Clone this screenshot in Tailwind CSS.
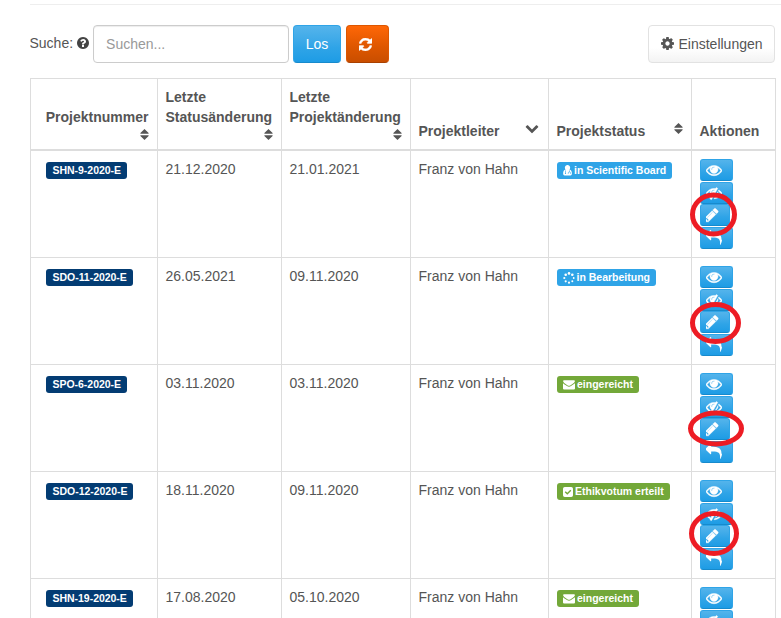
<!DOCTYPE html>
<html lang="de">
<head>
<meta charset="utf-8">
<title>Projekte</title>
<script src="https://cdn.jsdelivr.net/npm/@tailwindcss/browser@4"></script>
</head>
<body class="relative h-[618px] w-[781px] overflow-hidden bg-white font-['Liberation_Sans',Arial,sans-serif] text-[14px] leading-5 text-[#555]">
<svg class="hidden">
  <symbol id="eye" viewBox="0 0 1792 1792"><path stroke="white" stroke-width="50" d="M1664 960q-152-236-381-353 61 104 61 225 0 185-131.5 316.5t-316.5 131.5-316.5-131.5-131.5-316.5q0-121 61-225-229 117-381 353 133 205 333.5 326.5t434.5 121.5 434.5-121.5 333.5-326.5zm-720-384q0-20-14-34t-34-14q-125 0-214.5 89.5t-89.5 214.5q0 20 14 34t34 14 34-14 14-34q0-86 61-147t147-61q20 0 34-14t14-34zm848 384q0 34-20 69-140 230-376.5 368.5t-499.5 138.5-499.5-139-376.5-368q-20-35-20-69t20-69q140-229 376.5-368t499.5-139 499.5 139 376.5 368q20 35 20 69z"/></symbol>
  <symbol id="eye-slash" viewBox="0 0 1792 1792"><path stroke="white" stroke-width="50" d="M555 1335l78-141q-87-63-136-159t-49-203q0-121 61-225-229 117-381 353 167 258 427 375zm389-759q0-20-14-34t-34-14q-125 0-214.5 89.5t-89.5 214.5q0 20 14 34t34 14 34-14 14-34q0-86 61-147t147-61q20 0 34-14t14-34zm363-191q0 7-1 9-106 189-316 567t-315 566l-49 89q-10 16-28 16-12 0-134-70-16-10-16-28 0-12 44-87-143-65-263.5-173t-208.5-245q-20-31-20-69t20-69q153-235 380-371t496-136q89 0 180 17l54-97q10-16 28-16 5 0 18 6t31 15.5 33 18.5 31.5 18.5 19.5 11.5q16 10 16 27zm37 447q0 139-79 253.5t-209 164.5l280-502q8 45 8 84zm448 128q0 35-20 69-39 64-109 145-150 172-347.5 267t-419.5 95l74-132q212-18 392.5-137t301.5-307q-115-179-282-294l63-112q95 64 182.5 153t144.5 184q20 34 20 69z"/></symbol>
  <symbol id="pencil" viewBox="270 0 1792 1792"><path stroke="white" stroke-width="40" d="M491 1536l91-91-235-235-91 91v107h128v128h107zm523-928q0-22-22-22-10 0-17 7l-542 542q-7 7-7 17 0 22 22 22 10 0 17-7l542-542q7-7 7-17zm-54-192l416 416-832 832h-416v-416zm683 96q0 53-37 90l-166 166-416-416 166-165q36-38 90-38 53 0 91 38l235 234q37 39 37 91z"/></symbol>
  <symbol id="reply" viewBox="0 0 1792 1792"><path d="M1792 1120q0 166-127 451-3 7-10.5 24t-13.5 30-13 22q-12 17-28 17-15 0-23.5-10t-8.5-25q0-9 2.5-26.5t2.5-23.5q5-68 5-123 0-112-19.5-200.5t-54-153.5-89-112-117-79-144.5-47.5-164.5-25-186.5-7.5h-224v256q0 26-19 45t-45 19-45-19l-512-512q-19-19-19-45t19-45l512-512q19-19 45-19t45 19 19 45v256h224q713 0 875 403 53 134 53 333z"/></symbol>
  <symbol id="refresh" viewBox="128 128 1536 1536"><path stroke="white" stroke-width="50" d="M1639 1056q0 5-1 7-64 268-268 434.5t-478 166.5q-146 0-282.5-55t-243.5-157l-129 129q-19 19-45 19t-45-19-19-45v-448q0-26 19-45t45-19h448q26 0 45 19t19 45-19 45l-137 137q71 66 161 102t187 36q134 0 250-65t186-179q11-17 53-117 8-23 30-23h192q13 0 22.5 9.5t9.5 22.5zm25-800v448q0 26-19 45t-45 19h-448q-26 0-45-19t-19-45 19-45l138-138q-148-137-349-137-134 0-250 65t-186 179q-11 17-53 117-8 23-30 23h-199q-13 0-22.5-9.5t-9.5-22.5v-7q65-268 270-434.5t480-166.5q146 0 284 55.5t245 156.5l130-129q19-19 45-19t45 19 19 45z"/></symbol>
  <symbol id="cog" viewBox="128 128 1536 1536"><path d="M1152 896q0-106-75-181t-181-75-181 75-75 181 75 181 181 75 181-75 75-181zm512-109v222q0 12-8 23t-20 13l-185 28q-19 54-39 91 35 50 107 138 10 12 10 25t-9 23q-27 37-99 108t-94 71q-12 0-26-9l-138-108q-44 23-91 38-16 136-29 186-7 28-36 28h-222q-14 0-24.5-8.5t-11.5-21.5l-28-184q-49-16-90-37l-141 107q-10 9-25 9-14 0-25-11-126-114-165-168-7-10-7-23 0-12 8-23 15-21 51-66.5t54-70.5q-27-50-41-99l-183-27q-13-2-21-12.5t-8-23.5v-222q0-12 8-23t19-13l186-28q14-46 39-92-40-57-107-138-10-12-10-24 0-10 9-23 26-36 98.5-107.5t94.5-71.5q13 0 26 10l138 107q44-23 91-38 16-136 29-186 7-28 36-28h222q14 0 24.5 8.5t11.5 21.5l28 184q49 16 90 37l142-107q9-9 24-9 13 0 25 10 129 119 165 170 7 8 7 22 0 12-8 23-15 21-51 66.5t-54 70.5q26 50 41 98l183 28q13 2 21 12.5t8 23.5z"/></symbol>
  <symbol id="question" viewBox="128 128 1536 1536"><path d="M1024 1376v-192q0-14-9-23t-23-9h-192q-14 0-23 9t-9 23v192q0 14 9 23t23 9h192q14 0 23-9t9-23zm256-672q0-88-55.5-163t-138.5-116-170-41q-243 0-371 213-15 24 8 42l132 100q7 6 19 6 16 0 25-12 53-68 86-92 34-24 86-24 48 0 85.5 26t37.5 59q0 38-20 61t-68 45q-63 28-115.5 86.5t-52.5 125.5v36q0 14 9 23t23 9h192q14 0 23-9t9-23q0-19 21.5-49.5t54.5-49.5q32-18 49-28.5t46-35 44.5-48 28-60.5 12.5-81zm384 192q0 209-103 385.5t-279.5 279.5-385.5 103-385.5-103-279.5-279.5-103-385.5 103-385.5 279.5-279.5 385.5-103 385.5 103 279.5 279.5 103 385.5z"/></symbol>
  <symbol id="chevron" viewBox="0 0 1792 1792"><path d="M1683 808l-742 741q-19 19-45 19t-45-19l-742-741q-19-19-19-45.5t19-45.5l166-165q19-19 45-19t45 19l531 531 531-531q19-19 45-19t45 19l166 165q19 19 19 45.5t-19 45.5z"/></symbol>
  <symbol id="sort" viewBox="0 0 9 11"><path d="M4.5 0 8.6 4.1Q8.9 4.7 8.3 4.7H.7Q.1 4.7.4 4.1zM.7 6.3H8.3Q8.9 6.3 8.6 6.9L4.5 11 .4 6.9Q.1 6.3.7 6.3z"/></symbol>
  <symbol id="doctor" viewBox="0 0 9 11"><path d="M4.5 0a2.5 2.6 0 0 1 1.9 4.4Q8.9 5 8.9 8.6 8.9 10.6 7.4 10.6H1.6Q.1 10.6.1 8.6.1 5 2.6 4.4A2.5 2.6 0 0 1 4.5 0z"/><path d="M2.5 5.4v2.6M6.5 5.4v1.4M5.3 8.8V7.9q0-1 1.1-1t1.1 1v.9" fill="none" stroke="#2fa4e7" stroke-width=".6"/><circle cx="2.5" cy="8.5" r=".6" fill="#2fa4e7"/></symbol>
  <symbol id="spinner" viewBox="0 0 12 12"><circle cx="6" cy="1.4" r="1.3"/><circle cx="9.3" cy="2.7" r="1.3"/><circle cx="10.7" cy="6" r=".9"/><circle cx="9.3" cy="9.3" r="1"/><circle cx="6" cy="10.7" r="1.1"/><circle cx="2.7" cy="9.3" r="1.1"/><circle cx="1.3" cy="6" r="1.1"/><circle cx="2.7" cy="2.7" r="1.3"/></symbol>
  <symbol id="mail" viewBox="0 0 12 10"><path d="M1 .3H11Q12 .3 11.9 1.3 11.8 2.2 10.8 2.9L7.3 5.4Q6 6.2 4.7 5.4L1.2 2.9Q.2 2.2.1 1.3 0 .3 1 .3zM0 3.3Q.4 3.7 4 6.1 6 7.4 8 6.1L12 3.3V8.5Q12 9.6 10.9 9.6H1.1Q0 9.6 0 8.5z"/></symbol>
  <symbol id="check" viewBox="0 0 10 10"><path fill-rule="evenodd" d="M1.8 0H8.2Q10 0 10 1.8V8.2Q10 10 8.2 10H1.8Q0 10 0 8.2V1.8Q0 0 1.8 0zM4.3 7.8 8.3 3.8 7.3 2.8 4.3 5.8 2.7 4.2 1.7 5.2z"/></symbol>
</svg>

<main class="ml-[30px] h-[618px] w-[751px] overflow-hidden">
  <div class="h-[5px] border-b border-[#eee]"></div>
  <div class="mr-[5px] flex h-[73px] items-start pt-5">
    <label class="-ml-[0.5px] pt-[8px]">Suche:</label>
    <svg class="mt-[12px] ml-[3.5px] h-[12px] w-[12px] fill-[#444]"><use href="#question"/></svg>
    <input placeholder="Suchen..." class="ml-[4.5px] h-[38px] w-[196px] rounded-[4px] border border-[#ccc] px-3 shadow-[inset_0_1px_1px_rgba(0,0,0,0.075)] placeholder:text-[#999]">
    <button class="ml-1 h-[38px] w-[48px] rounded-[4px] border border-[#2fa4e7] border-b-[#178acc] bg-linear-to-b from-[#54b4eb] via-[#2fa4e7] via-60% to-[#1d9ce5] text-white">Los</button>
    <button class="ml-[5px] flex h-[38px] w-[43px] items-center rounded-[4px] border border-[#dd5600] border-b-[#a94000] bg-linear-to-b from-[#ff6707] via-[#dd5600] via-60% to-[#c94e00] pl-[12px]"><svg class="h-[13px] w-[13px] fill-white"><use href="#refresh"/></svg></button>
    <button class="ml-auto mr-px flex h-[38px] w-[127px] items-center justify-center gap-[4px] rounded-[4px] border border-[#e2e2e2] bg-linear-to-b from-white via-white via-60% to-[#f3f3f3]"><svg class="-mt-[2px] ml-px h-[13px] w-[13px] fill-[#555]"><use href="#cog"/></svg>Einstellungen</button>
  </div>

  <section class="w-[746px] border-t border-l border-[#ddd]">
    <header class="grid h-[72px] grid-cols-[127px_124px_129px_138px_143px_84px] border-b-2 border-[#ddd] font-bold *:border-r *:border-[#ddd]">
      <div class="flex flex-col items-end pt-[28px] pr-[8px]"><span class="mr-[0.6px]">Projektnummer</span><svg class="mt-[2px] h-[11px] w-[9px] fill-[#555]"><use href="#sort"/></svg></div>
      <div class="flex flex-col pt-2 pl-[7.5px]">Letzte<br>Statusänderung<svg class="mt-[2px] mr-[8px] h-[11px] w-[9px] self-end fill-[#555]"><use href="#sort"/></svg></div>
      <div class="flex flex-col pt-2 pl-[7.5px]">Letzte<br>Projektänderung<svg class="mt-[2px] mr-[8px] h-[11px] w-[9px] self-end fill-[#555]"><use href="#sort"/></svg></div>
      <div class="flex items-start justify-between pt-[42px] pr-[9px] pl-[7.5px]">Projektleiter<svg class="h-[14px] w-[14px] fill-[#555]"><use href="#chevron"/></svg></div>
      <div class="flex items-start justify-between pt-[42px] pr-[8px] pl-[7.5px]">Projektstatus<svg class="mt-[2px] h-[11px] w-[9px] fill-[#555]"><use href="#sort"/></svg></div>
      <div class="pt-[42px] pl-[7.5px]">Aktionen</div>
    </header>
    <div id="rows" class="h-[467px] overflow-hidden"></div>
  </section>
</main>

<svg class="pointer-events-none absolute inset-0 h-[618px] w-[781px] fill-none stroke-[#ed1c24] stroke-[5px]">
  <ellipse cx="713.5" cy="214.5" rx="21" ry="19.5"/>
  <ellipse cx="715.5" cy="323" rx="23" ry="18.5"/>
  <ellipse cx="716" cy="428.5" rx="25.5" ry="15.5"/>
  <ellipse cx="714" cy="533.5" rx="22.5" ry="20"/>
</svg>

<script>
const data = [
  ['SHN-9-2020-E', '21.12.2020', '21.01.2021', 'doctor', 'in Scientific Board'],
  ['SDO-11-2020-E', '26.05.2021', '09.11.2020', 'spinner', 'in Bearbeitung'],
  ['SPO-6-2020-E', '03.11.2020', '03.11.2020', 'mail', 'eingereicht'],
  ['SDO-12-2020-E', '18.11.2020', '09.11.2020', 'check', 'Ethikvotum erteilt'],
  ['SHN-19-2020-E', '17.08.2020', '05.10.2020', 'mail', 'eingereicht']
];
const icons = {
  doctor: 'h-[11px] w-[9px] mr-[2.5px]',
  spinner: 'h-[12px] w-[12px] mr-[2px]',
  mail: 'h-[10px] w-[12px] mr-[2.5px]',
  check: 'h-[10px] w-[10px] mr-[2.5px]'
};
const action = (icon, size) => `<button class="${size} flex h-[22px] items-center rounded-[3px] border border-[#2fa4e7] border-b-[#178acc] bg-linear-to-b from-[#54b4eb] via-[#2fa4e7] via-60% to-[#1d9ce5] pl-[5px]"><svg class="h-4 w-4 fill-white"><use href="#${icon}"/></svg></button>`;
document.getElementById('rows').innerHTML = data.map(([id, status, change, icon, label]) => {
  const blue = icon === 'doctor' || icon === 'spinner';
  return `<div class="grid h-[107px] grid-cols-[127px_124px_129px_138px_143px_84px] border-b border-[#ddd] *:border-r *:border-[#ddd] *:pt-2">
    <div class="pl-2"><span class="ml-[7px] mt-[3px] flex h-[17px] w-fit items-center rounded-[3px] bg-[#033c73] pr-[6px] pl-[6.5px] text-[10.5px] leading-none font-bold tracking-[-0.03px] text-white">${id}</span></div>
    <div class="pl-[7.5px]">${status}</div>
    <div class="pl-[7.5px]">${change}</div>
    <div class="pl-[7.5px]">Franz von Hahn</div>
    <div class="pl-2"><span class="${blue ? 'bg-[#2fa4e7]' : 'bg-[#73a839]'} mt-[3px] flex h-[17px] w-fit items-center rounded-[3px] pr-[6px] pl-[5.5px] text-[10.5px] leading-none font-bold text-white"><svg class="${icons[icon]} fill-white"><use href="#${icon}"/></svg>${label}</span></div>
    <div class="flex flex-col items-start pl-2">${action('eye', 'w-[33px]')}${action('eye-slash', 'w-[33px] mt-px')}${action('pencil', 'w-[30px]')}${action('reply', 'w-[33px] mt-px')}</div>
  </div>`;
}).join('');
</script>
</body>
</html>
